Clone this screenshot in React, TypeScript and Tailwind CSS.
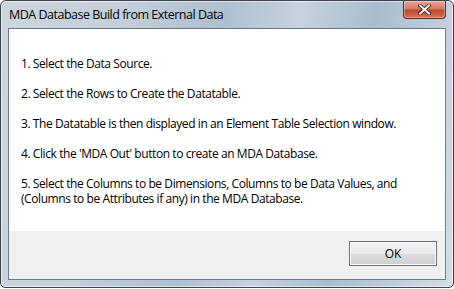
const steps = [
  "1. Select the Data Source.",
  "2. Select the Rows to Create the Datatable.",
  "3. The Datatable is then displayed in an Element Table Selection window.",
  "4. Click the 'MDA Out' button to create an MDA Database.",
  "5. Select the Columns to be Dimensions, Columns to be Data Values, and (Columns to be Attributes if any) in the MDA Database.",
];

function CloseButton() {
  return (
    <div className="flex h-[18px] w-[43px] items-center justify-center rounded-b-[4px] border border-t-0 border-[#5c2a24] bg-[linear-gradient(to_bottom,#e8a494_0%,#d67a66_45%,#c0452c_55%,#d8735a_100%)] shadow-[inset_0_0_0_1px_rgba(255,255,255,0.35)]">
      <svg width="13" height="11" viewBox="0 0 13 11">
        <path d="M2 1.5 L11 9.5 M11 1.5 L2 9.5" stroke="#3a1a16" strokeWidth="3.6" strokeLinecap="square" />
        <path d="M2 1.5 L11 9.5 M11 1.5 L2 9.5" stroke="#ffffff" strokeWidth="2" strokeLinecap="square" />
      </svg>
    </div>
  );
}

export default function App() {
  return (
    <div className="h-[289px] w-[454px] bg-white" style={{ fontFamily: '"Open Sans", "Segoe UI", sans-serif' }}>
      <div className="flex h-[288px] w-[454px] flex-col rounded-t-[6px] rounded-b-[5px] border border-[#3b4450] bg-[linear-gradient(100deg,#cdd6df_0%,#c4cfda_25%,#aebfcf_45%,#c6d3de_60%,#a9bccd_75%,#d5dee6_100%)] shadow-[inset_0_0_0_1px_rgba(255,255,255,0.55)]">
        <div className="flex h-[27px] shrink-0 items-start justify-between pl-[8px] pr-[7px]">
          <span className="pt-[6px] text-[12.5px] leading-[16px] tracking-[-0.5px] text-black">MDA Database Build from External Data</span>
          <CloseButton />
        </div>
        <div className="mx-[7px] mb-[7px] flex flex-1 flex-col border border-[#6d7a88]">
          <div className="flex flex-1 flex-col gap-[15px] bg-white pl-[12px] pr-[18px] pt-[27px] text-[12px] leading-[15px] tracking-[-0.42px] text-black">
            {steps.map((s) => (
              <p key={s}>{s}</p>
            ))}
          </div>
          <div className="flex h-[48px] shrink-0 items-start justify-end bg-[#f0f0f0] pr-[8px] pt-[10px]">
            <button className="h-[25px] w-[88px] border border-[#707070] bg-[linear-gradient(to_bottom,#f2f2f2_0%,#ebebeb_50%,#dddddd_51%,#cfcfcf_100%)] text-[12px] text-black shadow-[inset_0_0_0_1px_#fcfcfc]">
              OK
            </button>
          </div>
        </div>
      </div>
    </div>
  );
}
